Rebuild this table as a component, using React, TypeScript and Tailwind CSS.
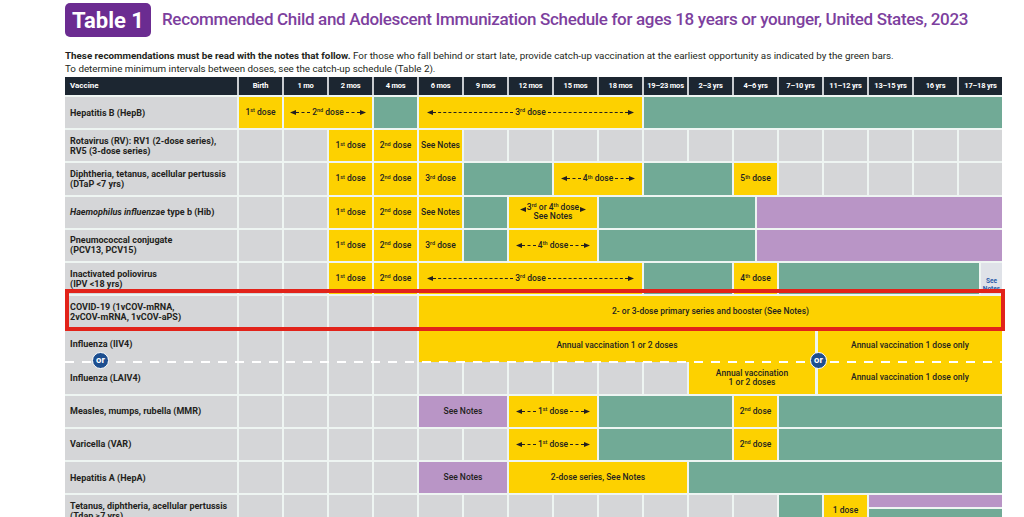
import React from "react";

type Tone = "y" | "g" | "p" | "x" | "n";
type Cell = { s?: number; c: Tone; t?: React.ReactNode };

const SPAN: Record<number, string> = {
  1: "col-span-1",
  2: "col-span-2",
  3: "col-span-3",
  4: "col-span-4",
  5: "col-span-5",
  7: "col-span-7",
  8: "col-span-8",
  9: "col-span-9",
  13: "col-span-13",
};

const BG: Record<Tone, string> = {
  y: "bg-[#fdd100]",
  g: "bg-[#71aa96]",
  p: "bg-[#b995c6]",
  x: "bg-[#d5d6d8]",
  n: "",
};

const GRID = "grid grid-cols-[172px_repeat(17,43px)] gap-x-[2px]";

const AGES = [
  "Birth",
  "1 mo",
  "2 mos",
  "4 mos",
  "6 mos",
  "9 mos",
  "12 mos",
  "15 mos",
  "18 mos",
  "19–23 mos",
  "2–3 yrs",
  "4–6 yrs",
  "7–10 yrs",
  "11–12 yrs",
  "13–15 yrs",
  "16 yrs",
  "17–18 yrs",
];

function Head({ dir }: { dir: "l" | "r" }) {
  return (
    <svg width="6" height="5" viewBox="0 0 6 5" className="shrink-0">
      {dir === "l" ? <polygon points="0,2.5 6,0 6,5" fill="#231f20" /> : <polygon points="6,2.5 0,0 0,5" fill="#231f20" />}
    </svg>
  );
}

function Arrow({ children, pad = "px-[7px]" }: { children: React.ReactNode; pad?: string }) {
  return (
    <div className={`flex w-full items-center ${pad}`}>
      <Head dir="l" />
      <span className="flex-1 border-t border-dashed border-[#231f20]" />
      <span className="whitespace-nowrap px-[2px]">{children}</span>
      <span className="flex-1 border-t border-dashed border-[#231f20]" />
      <Head dir="r" />
    </div>
  );
}

const dose = (n: string, sfx: string) => (
  <span className="whitespace-nowrap">
    {n}
    <sup className="text-[5.5px]">{sfx}</sup> dose
  </span>
);

const gray = (n: number): Cell[] => Array.from({ length: n }, () => ({ c: "x" as Tone }));

const greenPurple = (
  <div className="flex h-full w-full gap-x-[2px]">
    <div className="w-[156px] bg-[#71aa96]" />
    <div className="flex-1 bg-[#b995c6]" />
  </div>
);

const ROWS: { label: React.ReactNode; cells: Cell[] }[] = [
  {
    label: "Hepatitis B (HepB)",
    cells: [
      { c: "y", t: dose("1", "st") },
      { s: 2, c: "y", t: <Arrow pad="px-[6px]">2<sup className="text-[5.5px]">nd</sup> dose</Arrow> },
      { c: "g" },
      { s: 5, c: "y", t: <Arrow pad="px-[8px]">3<sup className="text-[5.5px]">rd</sup> dose</Arrow> },
      { s: 8, c: "g" },
    ],
  },
  {
    label: (
      <>
        Rotavirus (RV): RV1 (2-dose series),
        <br />
        RV5 (3-dose series)
      </>
    ),
    cells: [...gray(2), { c: "y", t: dose("1", "st") }, { c: "y", t: dose("2", "nd") }, { c: "y", t: "See Notes" }, ...gray(12)],
  },
  {
    label: (
      <>
        Diphtheria, tetanus, acellular pertussis
        <br />
        (DTaP &lt;7 yrs)
      </>
    ),
    cells: [
      ...gray(2),
      { c: "y", t: dose("1", "st") },
      { c: "y", t: dose("2", "nd") },
      { c: "y", t: dose("3", "rd") },
      { s: 2, c: "g" },
      { s: 2, c: "y", t: <Arrow>4<sup className="text-[5.5px]">th</sup> dose</Arrow> },
      { s: 2, c: "g" },
      { c: "y", t: dose("5", "th") },
      ...gray(5),
    ],
  },
  {
    label: (
      <>
        <i>Haemophilus influenzae</i> type b (Hib)
      </>
    ),
    cells: [
      ...gray(2),
      { c: "y", t: dose("1", "st") },
      { c: "y", t: dose("2", "nd") },
      { c: "y", t: "See Notes" },
      { c: "g" },
      {
        s: 2,
        c: "y",
        t: (
          <div className="flex flex-col items-center leading-[9px]">
            <div className="flex items-end gap-[1px]">
              <Head dir="l" />
              <span>
                3<sup className="text-[5.5px]">rd</sup> or 4<sup className="text-[5.5px]">th</sup> dose
              </span>
              <Head dir="r" />
            </div>
            <span>See Notes</span>
          </div>
        ),
      },
      { s: 9, c: "n", t: greenPurple },
    ],
  },
  {
    label: (
      <>
        Pneumococcal conjugate
        <br />
        (PCV13, PCV15)
      </>
    ),
    cells: [
      ...gray(2),
      { c: "y", t: dose("1", "st") },
      { c: "y", t: dose("2", "nd") },
      { c: "y", t: dose("3", "rd") },
      { c: "g" },
      { s: 2, c: "y", t: <Arrow>4<sup className="text-[5.5px]">th</sup> dose</Arrow> },
      { s: 9, c: "n", t: greenPurple },
    ],
  },
  {
    label: (
      <>
        Inactivated poliovirus
        <br />
        (IPV &lt;18 yrs)
      </>
    ),
    cells: [
      ...gray(2),
      { c: "y", t: dose("1", "st") },
      { c: "y", t: dose("2", "nd") },
      { s: 5, c: "y", t: <Arrow pad="px-[8px]">3<sup className="text-[5.5px]">rd</sup> dose</Arrow> },
      { s: 2, c: "g" },
      { c: "y", t: dose("4", "th") },
      {
        s: 5,
        c: "n",
        t: (
          <div className="flex h-full w-full gap-x-[2px]">
            <div className="flex-1 bg-[#71aa96]" />
            <div className="flex w-[21px] flex-col items-center justify-end bg-[#dfe2e8] pb-[1px] text-[6.5px] font-bold leading-[8px] text-[#2b5ca8]">
              <span>See</span>
              <span>Notes</span>
            </div>
          </div>
        ),
      },
    ],
  },
];

const ROWS_AFTER: { label: React.ReactNode; cells: Cell[] }[] = [
  {
    label: "Measles, mumps, rubella (MMR)",
    cells: [
      ...gray(4),
      { s: 2, c: "p", t: "See Notes" },
      { s: 2, c: "y", t: <Arrow>1<sup className="text-[5.5px]">st</sup> dose</Arrow> },
      { s: 3, c: "g" },
      { c: "y", t: dose("2", "nd") },
      { s: 5, c: "g" },
    ],
  },
  {
    label: "Varicella (VAR)",
    cells: [
      ...gray(6),
      { s: 2, c: "y", t: <Arrow>1<sup className="text-[5.5px]">st</sup> dose</Arrow> },
      { s: 3, c: "g" },
      { c: "y", t: dose("2", "nd") },
      { s: 5, c: "g" },
    ],
  },
  {
    label: "Hepatitis A (HepA)",
    cells: [...gray(4), { s: 2, c: "p", t: "See Notes" }, { s: 4, c: "y", t: "2-dose series, See Notes" }, { s: 7, c: "g" }],
  },
  {
    label: (
      <>
        Tetanus, diphtheria, acellular pertussis
        <br />
        (Tdap ≥7 yrs)
      </>
    ),
    cells: [
      ...gray(12),
      { c: "g" },
      { c: "y", t: "1 dose" },
      {
        s: 3,
        c: "n",
        t: (
          <div className="flex h-full w-full flex-col gap-y-[2px]">
            <div className="h-[12px] bg-[#b995c6]" />
            <div className="flex-1 bg-[#71aa96]" />
          </div>
        ),
      },
    ],
  },
];

function Row({ label, cells }: { label: React.ReactNode; cells: Cell[] }) {
  return (
    <div className={`${GRID} h-[31.2px]`}>
      <div className="flex items-center overflow-hidden whitespace-nowrap bg-[#d5d6d8] px-[5px] text-[9px] font-bold leading-[10px] text-[#231f20]">
        <div>{label}</div>
      </div>
      {cells.map((c, i) => (
        <div
          key={i}
          className={`${SPAN[c.s ?? 1]} ${BG[c.c]} flex items-center justify-center text-center text-[8.5px] font-medium leading-[9px] text-[#231f20]`}
        >
          {c.t}
        </div>
      ))}
    </div>
  );
}

function Or({ pos }: { pos: string }) {
  return (
    <div
      className={`absolute top-[23px] ${pos} z-10 flex h-[17px] w-[17px] items-center justify-center rounded-full border border-white bg-[#1d4e8f] pb-[1px] text-[9.5px] font-bold text-white`}
    >
      or
    </div>
  );
}

function FluRow() {
  const cell = "flex items-center justify-center text-center text-[8.5px] font-medium leading-[9px] text-[#231f20]";
  return (
    <div className={`relative ${GRID} h-[64.4px]`}>
      <div className="flex flex-col justify-between bg-[#d5d6d8] px-[5px] pb-[11px] pt-[10px] text-[9px] font-bold leading-[10px] text-[#231f20]">
        <span>Influenza (IIV4)</span>
        <span>Influenza (LAIV4)</span>
      </div>
      {[0, 1, 2, 3].map((i) => (
        <div key={i} className="bg-[#d5d6d8]" />
      ))}
      <div className="col-span-13 flex flex-col">
        <div className="flex h-1/2 gap-x-[3px]">
          <div className={`w-[396px] bg-[#fdd100] ${cell}`}>Annual vaccination 1 or 2 doses</div>
          <div className={`flex-1 bg-[#fdd100] ${cell}`}>Annual vaccination 1 dose only</div>
        </div>
        <div className="flex h-1/2 gap-x-[2px]">
          {[0, 1, 2, 3, 4, 5].map((i) => (
            <div key={i} className="w-[43px] bg-[#d5d6d8]" />
          ))}
          <div className={`w-[126px] bg-[#fdd100] ${cell}`}>
            Annual vaccination
            <br />1 or 2 doses
          </div>
          <div className={`ml-[1px] flex-1 bg-[#fdd100] ${cell}`}>Annual vaccination 1 dose only</div>
        </div>
      </div>
      <div className="pointer-events-none absolute inset-x-0 top-[31.2px] h-[2px] bg-[repeating-linear-gradient(90deg,#ffffff_0_9px,transparent_9px_17px)]" />
      <Or pos="left-[27px]" />
      <Or pos="left-[745px]" />
    </div>
  );
}

export default function App() {
  return (
    <div className="min-h-screen bg-white pl-[65px] pt-[3px] font-[Roboto,'Liberation_Sans',sans-serif]">
      <div className="flex items-center gap-x-[11px]">
        <div className="flex h-[34px] w-[86px] items-center justify-center rounded-[5px] bg-[#6b2c91] text-[22px] font-bold text-white">
          Table 1
        </div>
        <div className="whitespace-nowrap text-[17px] font-medium tracking-[-0.33px] text-[#7d3f9e]">
          Recommended Child and Adolescent Immunization Schedule for ages 18 years or younger, United States, 2023
        </div>
      </div>

      <div className="mt-[12px] text-[9.8px] leading-[13px] text-[#231f20]">
        <p>
          <b>These recommendations must be read with the notes that follow.</b> For those who fall behind or start late,
          provide catch-up vaccination at the earliest opportunity as indicated by the green bars.
        </p>
        <p>To determine minimum intervals between doses, see the catch-up schedule (Table 2).</p>
      </div>

      <div className="mt-[2px] flex w-[937px] flex-col gap-y-[2px] bg-[#eef5f2]">
        <div className={`${GRID} h-[18px] bg-[#c9cdd1]`}>
          <div className="flex items-center bg-[#1c2631] px-[5px] text-[8px] font-bold text-white">Vaccine</div>
          {AGES.map((a) => (
            <div key={a} className="flex items-center justify-center whitespace-nowrap bg-[#1c2631] text-[7.5px] font-bold tracking-[-0.2px] text-white">
              {a}
            </div>
          ))}
        </div>

        {ROWS.map((r, i) => (
          <Row key={i} label={r.label} cells={r.cells} />
        ))}

        <div className="relative">
          <Row
            label={
              <>
                COVID-19 (1vCOV-mRNA,
                <br />
                2vCOV-mRNA, 1vCOV-aPS)
              </>
            }
            cells={[...gray(4), { s: 13, c: "y", t: "2- or 3-dose primary series and booster (See Notes)" }]}
          />
          <div className="pointer-events-none absolute -bottom-[4px] -right-[3px] -top-[7px] left-0 z-10 border-[4px] border-[#e2231a]" />
        </div>

        <FluRow />

        {ROWS_AFTER.map((r, i) => (
          <Row key={i} label={r.label} cells={r.cells} />
        ))}
      </div>
    </div>
  );
}
